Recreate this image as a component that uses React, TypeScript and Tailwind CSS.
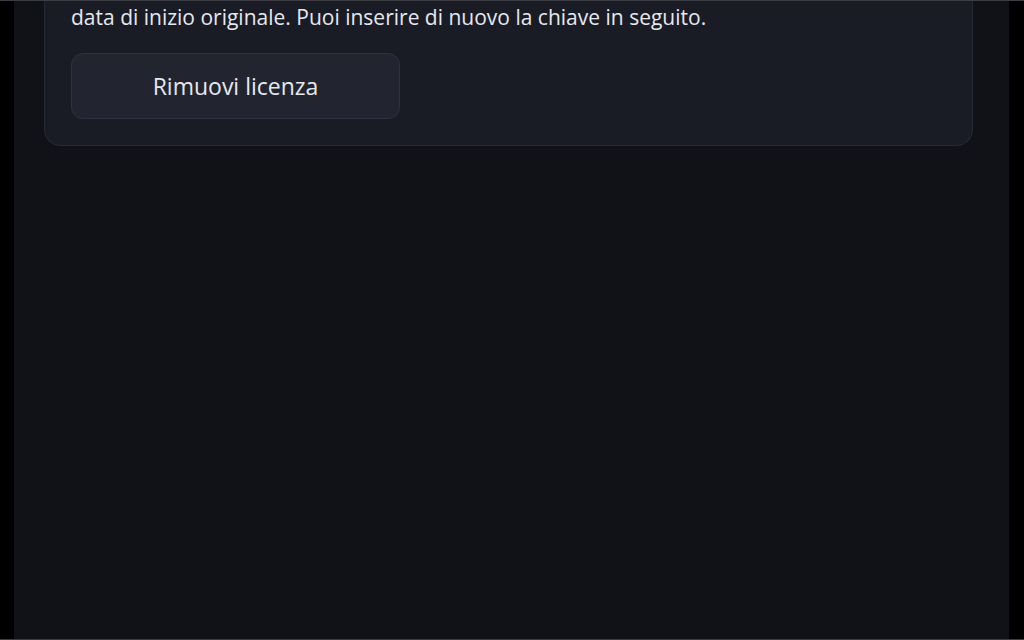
export default function App() {
  return (
    <div
      className="h-[640px] w-full overflow-hidden bg-black border-y border-[#3c3d42] flex"
      style={{ fontFamily: '"Open Sans", "Noto Sans", sans-serif' }}
    >
      <main className="ml-[14px] mr-[15px] flex-1 bg-[#111217] pl-[30px] pr-[36px] overflow-hidden">
        <section className="-mt-[25px] rounded-[16px] border border-[#262a36] bg-[#1a1c25] px-[26px] pt-[26px] pb-[26px]">
          <p className="text-[21px] leading-[28px] text-[#e6e8ee]">
            data di inizio originale. Puoi inserire di nuovo la chiave in seguito.
          </p>
          <button
            type="button"
            className="mt-[22px] h-[66px] w-[329px] rounded-[12px] border border-[#2e3241] bg-[#222530] text-[23px] text-[#e6e8ee]"
          >
            Rimuovi licenza
          </button>
        </section>
      </main>
    </div>
  );
}
